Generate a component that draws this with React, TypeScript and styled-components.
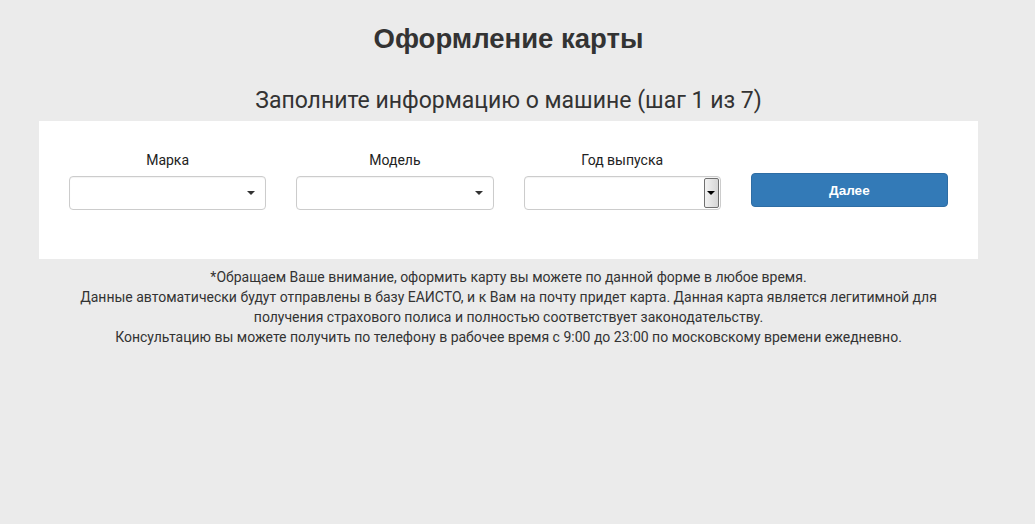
import React from "react";
import styled, { createGlobalStyle } from "styled-components";

const GlobalStyle = createGlobalStyle`
  html, body {
    margin: 0;
    padding: 0;
    background: #ebebeb;
  }
  body {
    font-family: Roboto, "Liberation Sans", Arial, sans-serif;
    color: #333;
  }
`;

const Page = styled.div`
  width: 1017px;
  min-height: 524px;
  display: flex;
  flex-direction: column;
  align-items: center;
`;

const Title = styled.h1`
  font-family: "Liberation Sans", Arial, sans-serif;
  font-weight: bold;
  font-size: 27.5px;
  line-height: 30px;
  color: #333;
  margin: 24px 0 0;
`;

const Subtitle = styled.h2`
  font-weight: 400;
  font-size: 23px;
  line-height: 30px;
  color: #333;
  margin: 32px 0 5px;
`;

const Panel = styled.div`
  width: 939px;
  box-sizing: border-box;
  background: #fff;
  padding: 27px 15px 49px;
  display: grid;
  grid-template-columns: repeat(4, 1fr);
`;

const Field = styled.div`
  padding: 0 15px;
  display: flex;
  flex-direction: column;
  align-items: stretch;
`;

const Label = styled.label`
  font-size: 14px;
  line-height: 24px;
  text-align: center;
  color: #222;
  margin-bottom: 4px;
`;

const Select = styled.div`
  position: relative;
  height: 34px;
  box-sizing: border-box;
  border: 1px solid #ccc;
  border-radius: 4px;
  background: #fff;
  box-shadow: inset 0 1px 1px rgba(0, 0, 0, 0.05);
`;

const Caret = styled.span`
  position: absolute;
  right: 10px;
  top: 14px;
  width: 0;
  height: 0;
  border-left: 4px solid transparent;
  border-right: 4px solid transparent;
  border-top: 4px solid #333;
`;

const ClassicArrow = styled.span`
  position: absolute;
  right: 1px;
  top: 1px;
  bottom: 1px;
  width: 15px;
  box-sizing: border-box;
  border: 1px solid #707070;
  border-radius: 2px;
  background: linear-gradient(to right, #f2f2f2, #d6d6d6);
  display: flex;
  align-items: center;
  justify-content: center;

  &::after {
    content: "";
    width: 0;
    height: 0;
    border-left: 4px solid transparent;
    border-right: 4px solid transparent;
    border-top: 4px solid #000;
  }
`;

const ButtonCell = styled.div`
  padding: 25px 15px 0;
`;

const Button = styled.button`
  width: 100%;
  height: 34px;
  border: 1px solid #2e6da4;
  border-radius: 4px;
  background: #337ab7;
  color: #fff;
  font-family: "Liberation Sans", Arial, sans-serif;
  font-weight: bold;
  font-size: 13.5px;
  cursor: pointer;
`;

const Note = styled.p`
  width: 870px;
  margin: 8px 0 0;
  font-size: 14px;
  line-height: 20px;
  text-align: center;
  color: #333;
`;

const fields = ["Марка", "Модель", "Год выпуска"];

export default function App() {
  return (
    <>
      <GlobalStyle />
      <Page>
        <Title>Оформление карты</Title>
        <Subtitle>Заполните информацию о машине (шаг 1 из 7)</Subtitle>
        <Panel>
          {fields.map((name, i) => (
            <Field key={name}>
              <Label>{name}</Label>
              <Select>{i === 2 ? <ClassicArrow /> : <Caret />}</Select>
            </Field>
          ))}
          <ButtonCell>
            <Button>Далее</Button>
          </ButtonCell>
        </Panel>
        <Note>
          *Обращаем Ваше внимание, оформить карту вы можете по данной форме в любое время.
          <br />
          Данные автоматически будут отправлены в базу ЕАИСТО, и к Вам на почту придет карта. Данная
          карта является легитимной для получения страхового полиса и полностью соответствует
          законодательству.
          <br />
          Консультацию вы можете получить по телефону в рабочее время с 9:00 до 23:00 по московскому
          времени ежедневно.
        </Note>
      </Page>
    </>
  );
}
